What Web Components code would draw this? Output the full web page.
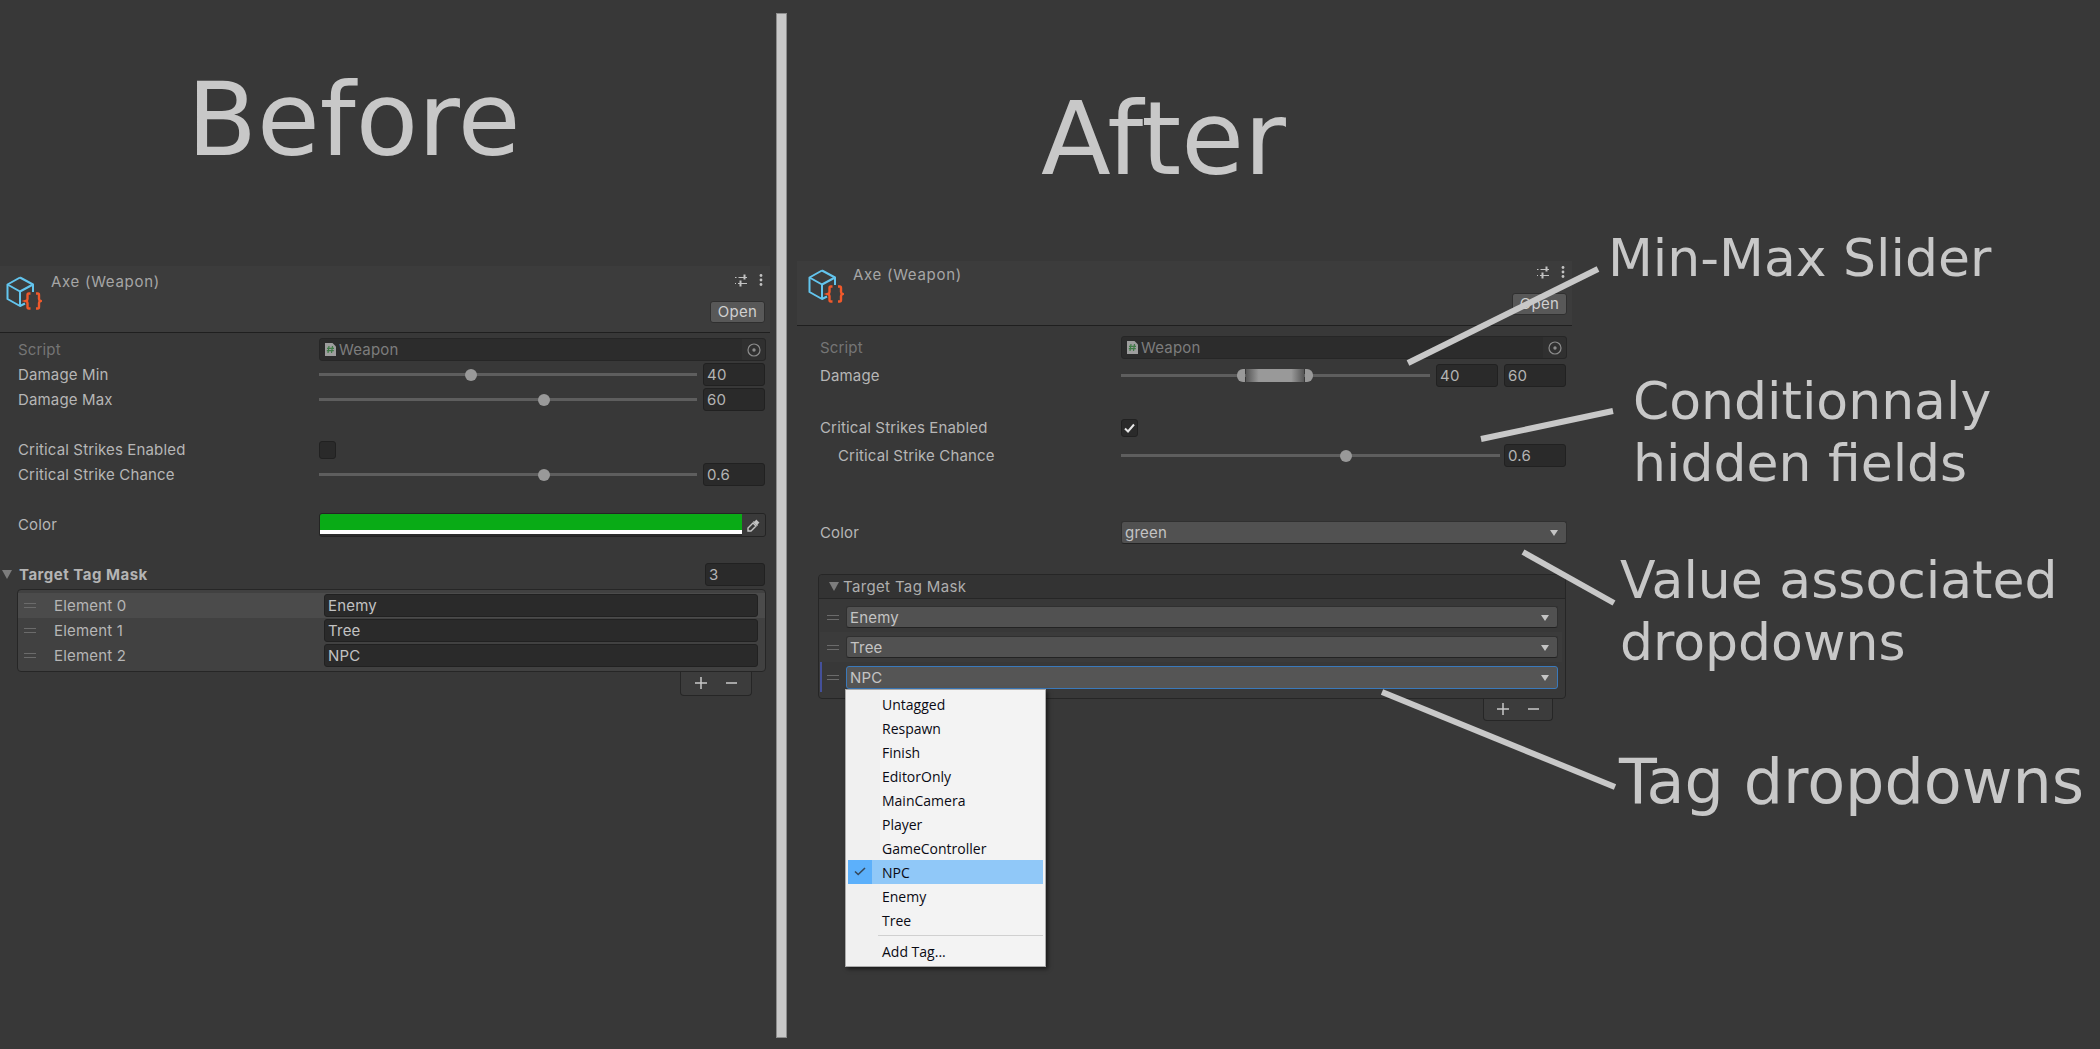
<!DOCTYPE html>
<html lang="en">
<head>
<meta charset="utf-8">
<title>Before / After</title>
<style>
  html, body { margin: 0; height: 100%; background: #383838; overflow: hidden; }
  before-after { --label: #b6b6b6; }
  .before-panel { margin-top: 88px; width: 770px; --pl: 18px; --pr: 4px; --head-h: 67px; --ipl: 6px; --head-top: 8px; --ic-top: 2px; --icons-top: 7px; }
  .after-panel { margin-top: 64px; margin-left: 10px; width: 775px; --pl: 23px; --pr: 5px; --head-h: 65px; --ipl: 11px; --head-top: 6px; --ic-top: 2px; --icons-top: 4px; }
  .gap3 { margin-top: 3px; }
  .gap25 { margin-top: 25px; }
  .m27 { margin-top: 27px; }
  .m52 { margin-top: 52px; }
</style>
</head>
<body>
<before-after>
  <page-title slot="before" style="--top:62px;--left:187px">Before</page-title>
  <inspector-panel slot="before" class="before-panel" first="4">
    <prop-row label="Script" dim><object-field>Weapon</object-field></prop-row>
    <prop-row label="Damage Min"><slider-field value="40.2" gap="6">40</slider-field></prop-row>
    <prop-row label="Damage Max"><slider-field value="59.5" gap="6">60</slider-field></prop-row>
    <prop-row class="gap25" label="Critical Strikes Enabled"><check-box></check-box></prop-row>
    <prop-row label="Critical Strike Chance"><slider-field value="59.5" gap="6">0.6</slider-field></prop-row>
    <prop-row class="gap25" label="Color"><color-field></color-field></prop-row>
    <prop-row class="gap25" label="Target Tag Mask" foldout><text-field style="flex:none;margin-left:auto;width:60px;margin-right:1px">3</text-field></prop-row>
    <element-list>
      <element-row label="Element 0" selected>Enemy</element-row>
      <element-row label="Element 1">Tree</element-row>
      <element-row label="Element 2">NPC</element-row>
    </element-list>
    <list-footer style="--mr:18px;--w:72px;--h:24px"></list-footer>
  </inspector-panel>

  <page-title slot="after" style="--top:81px;--left:254px">After</page-title>
  <inspector-panel slot="after" class="after-panel" first="9">
    <prop-row label="Script" dim><object-field>Weapon</object-field></prop-row>
    <prop-row class="gap3" label="Damage"><minmax-field></minmax-field></prop-row>
    <prop-row class="m27" label="Critical Strikes Enabled"><check-box checked></check-box></prop-row>
    <prop-row class="gap3" label="Critical Strike Chance" indent><slider-field value="59.4" gap="4">0.6</slider-field></prop-row>
    <prop-row class="m52" label="Color"><drop-down>green</drop-down></prop-row>
    <tag-list>
      <drop-row>Enemy</drop-row>
      <drop-row alt>Tree</drop-row>
      <drop-row focus>NPC<tag-menu slot="menu"></tag-menu></drop-row>
    </tag-list>
    <list-footer style="--mr:19px;--w:70px;--h:22px"></list-footer>
  </inspector-panel>

  <call-lines slot="notes"></call-lines>
  <call-out slot="notes" style="--x:1608px;--y:227px;--size:52px;--lh:62px">Min-Max Slider</call-out>
  <call-out slot="notes" style="--x:1633px;--y:370px;--size:52px;--lh:62px">Conditionnaly<br>hidden fields</call-out>
  <call-out slot="notes" style="--x:1620px;--y:549px;--size:52px;--lh:62px">Value associated<br>dropdowns</call-out>
  <call-out slot="notes" style="--x:1619px;--y:746px;--size:62px;--lh:72px">Tag dropdowns</call-out>
</before-after>

<script>
function def(name, css, html, onInit) {
  customElements.define(name, class extends HTMLElement {
    constructor() { super(); this.attachShadow({ mode: 'open' }); }
    connectedCallback() {
      const a = n => this.getAttribute(n);
      const h = n => this.hasAttribute(n);
      this.shadowRoot.innerHTML = '<style>' + css + '</style>' + (typeof html === 'function' ? html(a, h) : html);
      if (onInit) onInit(this);
    }
  });
}
const UI = `font-family: Inter, "Liberation Sans", sans-serif; font-size: 15px;`;
const FIELD = `box-sizing:border-box;height:23px;background:#2a2a2a;border:1px solid #212121;border-radius:3px;color:#b4b4b4;display:flex;align-items:center;padding:0 0 0 3px;`;

def('before-after', `
  :host { display:flex; position:relative; width:2100px; height:1049px; overflow:hidden; background:#383838; ${UI} color:var(--label); }
  .col { display:flex; flex-direction:column; }
  .l { width:776px; flex:none; }
  .div { width:11px; flex:none; box-sizing:border-box; margin:13px 0 0; height:1025px; background:#c8c8c8; border:1px solid #8c8c8c; }
  .r { flex:1; min-width:0; }
`, `<div class="col l"><slot name="before"></slot></div><div class="div"></div><div class="col r"><slot name="after"></slot></div><slot name="notes"></slot>`);

def('page-title', `
  :host { display:block; box-sizing:content-box; padding:var(--top) 0 0 var(--left); font:102px/116px "DejaVu Sans",sans-serif; color:#c8c8c8; white-space:nowrap; }
`, `<slot></slot>`);

const CUBE = `<svg width="36" height="36" viewBox="0 0 36 36" fill="none">
  <path d="M14 1.5 L1.5 8.5 V23 L14 30 L19 27.5" stroke="#63c5ee" stroke-width="2" stroke-linejoin="round"/>
  <path d="M14 1.5 L27 8.5 V16" stroke="#63c5ee" stroke-width="2" stroke-linejoin="round"/>
  <path d="M1.5 8.5 L14 15.5 L27 8.5 M14 15.5 V30" stroke="#63c5ee" stroke-width="2" stroke-linejoin="round"/>
  <path d="M24.5 17.5 H22.8 Q21.5 17.5 21.5 19 V23 Q21.5 24.5 19.8 25 Q21.5 25.5 21.5 27 V31 Q21.5 32.5 22.8 32.5 H24.5" stroke="#f0592b" stroke-width="2.4"/>
  <path d="M30 17.5 H31.7 Q33 17.5 33 19 V23 Q33 24.5 34.7 25 Q33 25.5 33 27 V31 Q33 32.5 31.7 32.5 H30" stroke="#f0592b" stroke-width="2.4"/>
</svg>`;
const TUNE = `<svg width="13" height="13" viewBox="0 0 13 13" fill="none" stroke="#c2c2c2" stroke-width="1">
  <path d="M0 3.5H1.5M3.5 3.5H12"/><path d="M9.5 0.5v5" stroke-width="2"/>
  <path d="M0 9.5H1M3 9.5H12"/><path d="M5.5 6.5v6" stroke-width="2"/>
</svg>`;
const DOTS = `<svg width="4" height="12" viewBox="0 0 4 12" fill="#c2c2c2"><circle cx="2" cy="1.5" r="1.4"/><circle cx="2" cy="6" r="1.4"/><circle cx="2" cy="10.5" r="1.4"/></svg>`;

def('inspector-panel', `
  :host { display:block; }
  .head { box-sizing:border-box; height:var(--head-h); background:#3c3c3c; border-bottom:1px solid #1f1f1f; display:grid; grid-template-columns:1fr auto; padding:0 5px 0 var(--ipl); }
  .id { display:flex; gap:9px; align-items:flex-start; padding-top:var(--head-top); }
  .ic { margin-top:var(--ic-top); height:36px; }
  .t { color:#a6a6a6; line-height:16px; letter-spacing:.7px; }
  .tools { display:flex; flex-direction:column; align-items:flex-end; }
  .icons { display:flex; gap:11px; align-items:center; height:14px; margin-top:var(--icons-top); padding-right:2px; }
  .open { box-sizing:border-box; margin-top:14px; width:55px; height:22px; background:#585858; border:1px solid #2f2f2f; border-radius:3px; color:#d0d0d0; text-align:center; line-height:19px; letter-spacing:.3px; }
  .body { padding-top:var(--first,3px); }
`, (a) => `
  <div class="head">
    <div class="id"><div class="ic">${CUBE}</div><div class="t">Axe (Weapon)</div></div>
    <div class="tools"><div class="icons">${TUNE}${DOTS}</div><div class="open">Open</div></div>
  </div>
  <div class="body" style="--first:${a('first')}px"><slot></slot></div>`);

def('prop-row', `
  :host { display:grid; grid-template-columns:301px 1fr; align-items:center; box-sizing:border-box; height:25px; padding:0 var(--pr) 0 var(--pl); }
  .lbl { white-space:nowrap; color:#b6b6b6; letter-spacing:.15px; position:relative; }
  .dim { color:#757575; }
  .ind { padding-left:18px; }
  .fold { font-weight:700; color:#b4b4b4; padding-left:1px; letter-spacing:.5px; }
  .tri { position:absolute; left:-16px; top:5px; width:0; height:0; border:5.5px solid transparent; border-top:9px solid #7d7d7d; border-bottom:0; }
  .val { min-width:0; display:flex; }
  ::slotted(*) { flex:1; min-width:0; }
`, (a, h) => `
  <div class="lbl ${h('dim') ? 'dim' : ''} ${h('indent') ? 'ind' : ''} ${h('foldout') ? 'fold' : ''}">${h('foldout') ? '<i class="tri"></i>' : ''}${a('label')}</div>
  <div class="val"><slot></slot></div>`);

def('object-field', `
  :host { ${FIELD} padding-left:5px; position:relative; color:#7d7d7d; background:#2c2c2c; border-color:#262626; letter-spacing:.2px; }
  svg.f { margin-right:3px; flex:none; }
  .pick { position:absolute; right:0; top:0; bottom:0; width:23px; background:#303030; display:flex; align-items:center; justify-content:center; border-radius:0 3px 3px 0; }
`, `<svg class="f" width="11" height="13" viewBox="0 0 11 13"><path d="M0 0H7.5L11 3.5V13H0Z" fill="#9e9e9e"/><path d="M4 3L3 10M7.5 3L6.5 10M2 5.3H9M1.8 7.7H8.8" stroke="#3f7a46" stroke-width="1.2"/></svg><slot></slot>
  <div class="pick"><svg width="14" height="14" viewBox="0 0 14 14" fill="none"><circle cx="7" cy="7" r="6" stroke="#8c8c8c" stroke-width="1.2"/><circle cx="7" cy="7" r="1.7" fill="#8c8c8c"/></svg></div>`);

def('text-field', `
  :host { ${FIELD} letter-spacing:.2px; }
`, `<slot></slot>`);

def('slider-field', `
  :host { display:flex; align-items:center; }
  .track { flex:1; height:3px; background:#5e5e5e; position:relative; }
  .thumb { position:absolute; top:50%; width:12px; height:12px; margin:-6px 0 0 -6px; border-radius:50%; background:#999; }
  text-field { width:62px; flex:none; margin-right:1px; }
`, (a) => `<div class="track"><div class="thumb" style="left:${a('value')}%"></div></div>
  <text-field style="margin-left:${a('gap')}px"><slot></slot></text-field>`);

def('minmax-field', `
  :host { display:flex; align-items:center; }
  .track { flex:1; height:3px; background:#5e5e5e; position:relative; }
  .thumb { position:absolute; left:37.5%; top:-5px; width:76px; height:13px; display:flex; }
  .cap { width:8px; background:#999; flex:none; }
  .cap.a { border-radius:6px 0 0 6px; }
  .cap.b { border-radius:0 6px 6px 0; }
  .mid { flex:1; margin:0 1px; background:linear-gradient(90deg,#555,#999 22%,#999 78%,#555); }
  text-field { width:62px; flex:none; margin-left:6px; }
  text-field:last-child { margin-right:1px; }
`, `<div class="track"><div class="thumb"><div class="cap a"></div><div class="mid"></div><div class="cap b"></div></div></div>
  <text-field>40</text-field><text-field>60</text-field>`);

def('check-box', `
  :host { display:block; flex:none !important; box-sizing:border-box; width:17px; height:18px; background:#2a2a2a; border:1px solid #212121; border-radius:3px; }
  svg { display:block; margin:2px 1px; }
`, (a, h) => h('checked') ? `<svg width="13" height="12" viewBox="0 0 13 12" fill="none"><path d="M2 6.5L5 9.5L11 2.5" stroke="#e6e6e6" stroke-width="2"/></svg>` : ``);

def('color-field', `
  :host { display:flex; box-sizing:border-box; height:24px; background:#2c2c2c; border:1px solid #242424; border-radius:3px; overflow:hidden; }
  .sw { flex:1; display:flex; flex-direction:column; }
  .g { height:16px; background:#09ab16; }
  .w { height:4px; background:#fff; }
  .e { width:23px; background:#3a3a3a; display:flex; align-items:center; justify-content:center; flex:none; }
`, `<div class="sw"><div class="g"></div><div class="w"></div></div>
  <div class="e"><svg width="14" height="14" viewBox="0 0 14 14" fill="#c4c4c4"><path d="M9.2 1.5 L12.5 4.8 L10.6 6.3 L11 7.2 L10 8 L6 4 L6.8 3 L7.7 3.4Z"/><path d="M6 5L9 8L4 13H1V10Z" fill="none" stroke="#c4c4c4" stroke-width="1.4"/></svg></div>`);

def('drop-down', `
  :host { position:relative; box-sizing:border-box; height:23px; display:flex; align-items:center; padding-left:3px; color:#c4c4c4; background:#515151; border:1px solid #303030; border-bottom-color:#232323; border-radius:3px; letter-spacing:.2px; }
  :host([compact]) { height:22px; }
  :host([focus]) { background:#555; border-color:#3a79bb; }
  .arrow { position:absolute; right:8px; top:8px; width:0; height:0; border:4.5px solid transparent; border-top:6px solid #c4c4c4; border-bottom:0; }
`, `<slot></slot><span class="arrow"></span><slot name="menu"></slot>`);

def('element-list', `
  :host { display:block; box-sizing:border-box; margin:2px 4px 0 17px; padding:3px 0 3px; background:#414141; border:1px solid #262626; border-radius:4px; }
`, `<slot></slot>`);

const HANDLE = `<svg width="12" height="5" viewBox="0 0 12 5" fill="none" stroke="#6b6b6b"><path d="M0 .5H12M0 4.5H12"/></svg>`;

def('element-row', `
  :host { display:grid; grid-template-columns:30px 270px 1fr; align-items:center; box-sizing:border-box; height:25px; padding-left:6px; padding-right:7px; }
  :host([selected]) { background:#4b4b4b; }
  .lbl { color:#b6b6b6; letter-spacing:.2px; white-space:nowrap; }
  svg { display:block; }
  text-field { color:#c2c2c2; }
`, `${HANDLE}<div class="lbl"></div><text-field><slot></slot></text-field>`, el => {
  el.shadowRoot.querySelector('.lbl').textContent = el.getAttribute('label');
});

def('list-footer', `
  :host { display:flex; box-sizing:border-box; align-self:flex-end; margin-left:auto; margin-right:var(--mr); width:var(--w); height:var(--h); background:#3c3c3c; border:1px solid #262626; border-top:0; border-radius:0 0 4px 4px; align-items:center; justify-content:center; gap:19px; padding-bottom:1px; }
`, `<svg width="12" height="12" viewBox="0 0 12 12" stroke="#c8c8c8" stroke-width="1.5"><path d="M0 6H12M6 0V12"/></svg><svg width="11" height="12" viewBox="0 0 11 12" stroke="#c8c8c8" stroke-width="1.5"><path d="M0 6H11"/></svg>`);

def('tag-list', `
  :host { display:block; box-sizing:border-box; margin:29px 6px 0 21px; height:125px; background:#383838; border:1px solid #262626; border-radius:4px; }
  .h { box-sizing:border-box; height:24px; background:#333; border-bottom:1px solid #262626; display:flex; align-items:center; gap:4px; padding-left:10px; color:#aeaeae; letter-spacing:.35px; border-radius:4px 4px 0 0; }
  .tri { width:0; height:0; border:5.5px solid transparent; border-top:9px solid #7d7d7d; border-bottom:0; }
  .b { padding-top:3px; }
`, `<div class="h"><i class="tri"></i><span>Target Tag Mask</span></div><div class="b"><slot></slot></div>`);

def('drop-row', `
  :host { display:flex; align-items:center; box-sizing:border-box; height:30px; margin:0 3px 0 1px; padding:0 4px 0 5px; gap:7px; border-left:2px solid transparent; }
  :host([alt]) { background:#3b3b3b; }
  :host([focus]) { border-left-color:#44509a; }
  svg { flex:none; }
  drop-down { flex:1; min-width:0; }
`, (a, h) => `${HANDLE}<drop-down ${h('focus') ? 'focus' : 'compact'}><slot></slot><slot name="menu" slot="menu"></slot></drop-down>`);

def('tag-menu', `
  :host { position:absolute; left:-2px; top:22px; z-index:5; width:201px; box-sizing:border-box; padding:2px 2px 3px; background:linear-gradient(90deg,#f0f0f0 34px,#f3f3f3 34px); border:1px solid #ababab; box-shadow:2px 2px 4px rgba(0,0,0,.55); font:14px/26px "Open Sans","Noto Sans",sans-serif; color:#0a0a14; letter-spacing:0; }
  .i { height:24px; padding-left:34px; white-space:nowrap; position:relative; }
  .on { background:#90c8f8; }
  .c { position:absolute; left:0; top:0; width:24px; height:24px; background:#5cb0fb; display:flex; align-items:center; justify-content:center; }
  .sep { height:1px; background:#d0d0d0; margin:3px 0 3px 30px; }
`, `
  <div class="i">Untagged</div><div class="i">Respawn</div><div class="i">Finish</div><div class="i">EditorOnly</div>
  <div class="i">MainCamera</div><div class="i">Player</div><div class="i">GameController</div>
  <div class="i on"><span class="c"><svg width="12" height="9" viewBox="0 0 12 9" fill="none"><path d="M1 4.5L4.2 7.5L11 1" stroke="#36485a" stroke-width="1.6"/></svg></span>NPC</div>
  <div class="i">Enemy</div><div class="i">Tree</div><div class="sep"></div><div class="i">Add Tag...</div>`);

def('call-lines', `
  :host { position:absolute; left:0; top:0; width:2100px; height:1049px; pointer-events:none; }
  svg { display:block; }
`, `<svg width="2100" height="1049" viewBox="0 0 2100 1049" fill="none" stroke="#c8c8c8" stroke-width="6">
  <path d="M1408 363L1598 269"/><path d="M1481 439L1613 411"/><path d="M1523 552L1614 603"/><path d="M1382 692L1615 787"/></svg>`);

def('call-out', `
  :host { position:absolute; left:var(--x); top:var(--y); font:var(--size)/var(--lh) "DejaVu Sans",sans-serif; color:#c8c8c8; white-space:nowrap; }
`, `<slot></slot>`);
</script>
</body>
</html>
